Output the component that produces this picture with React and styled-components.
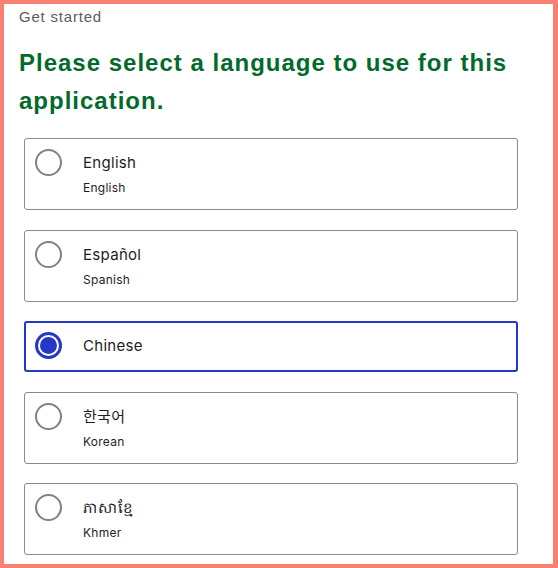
import React, { useState } from 'react'
import styled, { createGlobalStyle } from 'styled-components'

const GlobalStyle = createGlobalStyle`
  html, body {
    margin: 0;
    padding: 0;
    background: #ffffff;
  }
  * {
    box-sizing: border-box;
  }
`

const Frame = styled.div`
  width: 558px;
  height: 568px;
  border: 4px solid #fa8072;
  border-right-width: 5px;
  padding: 3px 15px 0;
  overflow: hidden;
  background: #fff;
`

const Eyebrow = styled.div`
  font-family: 'Liberation Sans', Arial, sans-serif;
  font-size: 15px;
  line-height: 20px;
  color: #5c5c5c;
  letter-spacing: 0.8px;
`

const Heading = styled.h1`
  margin: 17px 0 18px;
  font-family: 'Liberation Sans', Arial, sans-serif;
  font-weight: 700;
  font-size: 24px;
  line-height: 38px;
  letter-spacing: 1px;
  color: #036a2c;
`

const OptionList = styled.div`
  display: flex;
  flex-direction: column;
  gap: 19.6px;
  margin-left: 5px;
  width: 494px;
`

const Card = styled.label`
  display: flex;
  align-items: flex-start;
  gap: 21px;
  border: ${(p) => (p.$selected ? '2px solid #2537c6' : '1px solid #8a8a8a')};
  border-radius: 3px;
  padding: ${(p) => (p.$selected ? '9px 9px 11px' : '10px 10px 12px')};
  cursor: pointer;
  background: #fff;
`

const Radio = styled.span`
  flex: 0 0 auto;
  width: 27px;
  height: 27px;
  border-radius: 50%;
  border: ${(p) => (p.$checked ? '3px solid #2537c6' : '2px solid #828282')};
  padding: 2px;
  background: #fff;
  &::after {
    content: '';
    display: block;
    width: 100%;
    height: 100%;
    border-radius: 50%;
    background: ${(p) => (p.$checked ? '#2537c6' : 'transparent')};
  }
`

const TextBlock = styled.div`
  display: flex;
  flex-direction: column;
  padding-top: 4px;
  font-family: Inter, 'Noto Sans CJK KR', 'Noto Sans', sans-serif;
  color: #1d1d26;
`

const Label = styled.span`
  font-size: 15px;
  line-height: 20px;
  letter-spacing: 0.3px;
`

const Sub = styled.span`
  margin-top: 6px;
  font-size: 12px;
  line-height: 18px;
  letter-spacing: 0.25px;
`

const languages = [
  { id: 'en', label: 'English', sub: 'English' },
  { id: 'es', label: 'Español', sub: 'Spanish' },
  { id: 'zh', label: 'Chinese' },
  { id: 'ko', label: '한국어', sub: 'Korean' },
  { id: 'km', label: 'ភាសាខ្មែ', sub: 'Khmer' },
]

export default function App() {
  const [selected, setSelected] = useState('zh')
  return (
    <>
      <GlobalStyle />
      <Frame>
        <Eyebrow>Get started</Eyebrow>
        <Heading>Please select a language to use for this application.</Heading>
        <OptionList role="radiogroup">
          {languages.map((lang) => (
            <Card key={lang.id} $selected={selected === lang.id} onClick={() => setSelected(lang.id)}>
              <Radio $checked={selected === lang.id} />
              <TextBlock>
                <Label>{lang.label}</Label>
                {lang.sub ? <Sub>{lang.sub}</Sub> : null}
              </TextBlock>
            </Card>
          ))}
        </OptionList>
      </Frame>
    </>
  )
}
